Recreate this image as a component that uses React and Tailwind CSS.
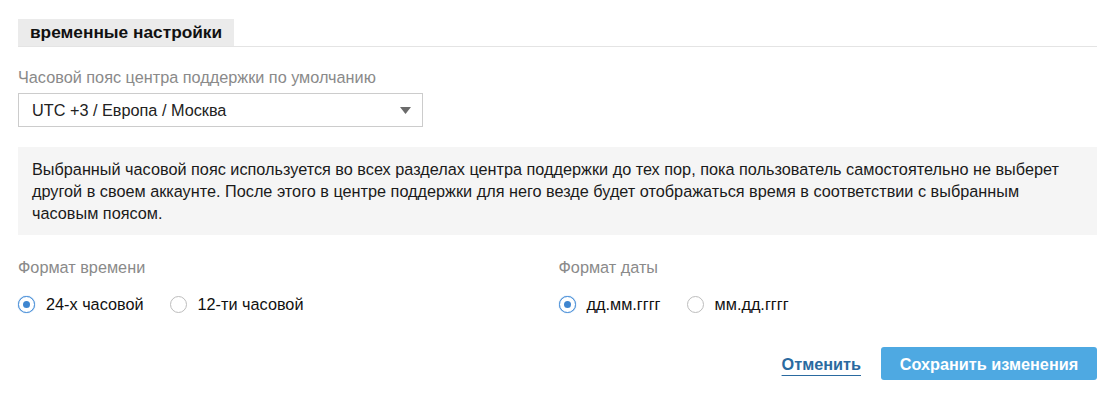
import React from "react";

function Radio({ checked, label }) {
  return (
    <label className="flex items-center gap-[11px] cursor-pointer">
      {checked ? (
        <span className="w-[17px] h-[17px] rounded-full border border-[#4a90d9] bg-white flex items-center justify-center shadow-[0_0_1px_#4a90d9]">
          <span className="w-[7px] h-[7px] rounded-full bg-[#3f86d0]" />
        </span>
      ) : (
        <span className="w-[17px] h-[17px] rounded-full border border-[#bdbdbd] bg-white" />
      )}
      <span className="text-[16.25px] text-[#111]">{label}</span>
    </label>
  );
}

export default function App() {
  return (
    <div className="bg-white w-[1117px] h-[396px] pl-[18px] pr-[20px] pt-[19px] text-[#222]" style={{ fontFamily: '"Liberation Sans", Arial, sans-serif' }}>
      <div className="border-b border-[#e4e4e4] flex">
        <div className="bg-[#ebebeb] h-[27px] pl-[12px] pr-[12px] flex items-center text-[17.3px] font-bold text-[#111]">
          временные настройки
        </div>
      </div>

      <div className="mt-[20px] text-[16.25px] text-[#8a8a8a] leading-[20px]">
        Часовой пояс центра поддержки по умолчанию
      </div>
      <div className="mt-[6px] w-[405px] h-[34px] border border-[#cccccc] flex items-center justify-between pl-[13px] pr-[11px]">
        <span className="text-[16.25px] text-[#222]">UTC +3 / Европа / Москва</span>
        <svg width="11" height="7" viewBox="0 0 11 7"><path d="M0 0h11L5.5 7z" fill="#6b6b6b" /></svg>
      </div>

      <div className="mt-[20px] bg-[#f5f5f5] pl-[14px] pr-[20px] pt-[11px] pb-[11px] text-[16.25px] leading-[22px] text-[#1a1a1a]">
        Выбранный часовой пояс используется во всех разделах центра поддержки до тех пор, пока пользователь самостоятельно не выберет другой в своем аккаунте. После этого в центре поддержки для него везде будет отображаться время в соответствии с выбранным часовым поясом.
      </div>

      <div className="mt-[22px] grid grid-cols-2">
        <div>
          <div className="text-[16.25px] text-[#8a8a8a] leading-[20px]">Формат времени</div>
          <div className="mt-[15px] flex items-center gap-[26px]">
            <Radio checked label="24-х часовой" />
            <Radio label="12-ти часовой" />
          </div>
        </div>
        <div className="pl-[1px]">
          <div className="text-[16.25px] text-[#8a8a8a] leading-[20px]">Формат даты</div>
          <div className="mt-[15px] flex items-center gap-[26px]">
            <Radio checked label="дд.мм.гггг" />
            <Radio label="мм.дд.гггг" />
          </div>
        </div>
      </div>

      <div className="mt-[31px] flex justify-end items-center gap-[20px]">
        <a className="text-[16.25px] font-bold text-[#2a6aa0] underline underline-offset-[5px] decoration-[1px] cursor-pointer">Отменить</a>
        <button className="w-[216px] h-[33px] rounded-[3px] bg-[#4ea9e2] text-white text-[16.25px] font-bold">
          Сохранить изменения
        </button>
      </div>
    </div>
  );
}
